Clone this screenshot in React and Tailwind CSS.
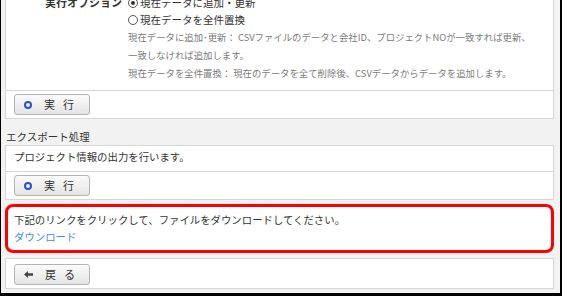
import React from "react";

const font = { fontFamily: '"Noto Sans CJK JP", "Noto Sans", sans-serif' };

const Radio = ({ checked }) => (
  <span className="inline-flex w-[10px] h-[10px] rounded-full border border-[#555] bg-white items-center justify-center mr-[2px] shrink-0">
    {checked && <span className="w-[4px] h-[4px] rounded-full bg-[#333]" />}
  </span>
);

const ActionButton = ({ icon, label }) => (
  <button className="flex items-center w-[76px] h-[21px] rounded-[3px] border border-[#b4b4b4] bg-gradient-to-b from-[#fbfbfb] to-[#e4e4e4] text-[11px] text-[#333] pl-[9px]">
    {icon}
    <span className="ml-[12px] tracking-[8px]">{label}</span>
  </button>
);

const RunIcon = () => (
  <span className="w-[8px] h-[8px] rounded-full border-2 border-[#2a52c9]" />
);

const BackIcon = () => (
  <svg width="9" height="7" viewBox="0 0 9 7">
    <path d="M0 3.5 L4 0 L4 2.3 L9 2.3 L9 4.7 L4 4.7 L4 7 Z" fill="#444" />
  </svg>
);

const App = () => {
  return (
    <div
      className="w-[562px] h-[296px] overflow-hidden bg-[#f2f2f2] border-l border-r-2 border-b-[3px] border-black pl-[4px] pr-[6px] text-[#333]"
      style={font}
    >
      {/* Import options panel */}
      <div className="-mt-[10px] bg-white border border-[#d6d6d6]">
        <div className="flex pt-[3px] pb-[8px]">
          <div className="w-[122px] text-right pr-[6px] text-[11px] leading-[17px] font-bold text-[#333]">
            実行オプション
          </div>
          <div className="flex-1">
            <div className="flex items-center text-[10.5px] leading-[17px]">
              <Radio checked />
              現在データに追加・更新
            </div>
            <div className="flex items-center text-[10.5px] leading-[17px]">
              <Radio />
              現在データを全件置換
            </div>
            <div className="text-[9.4px] leading-[18px] text-[#7a7a7a]">
              <p>現在データに追加･更新： CSVファイルのデータと会社ID、プロジェクトNOが一致すれば更新、</p>
              <p>一致しなければ追加します。</p>
              <p>現在データを全件置換： 現在のデータを全て削除後、CSVデータからデータを追加します。</p>
            </div>
          </div>
        </div>
        <div className="border-t border-[#d6d6d6] pt-[3px] pb-[3px] pl-[8px]">
          <ActionButton icon={<RunIcon />} label="実行" />
        </div>
      </div>

      {/* Export */}
      <div className="pt-[10px] pl-[1px] text-[10.5px] leading-[16px]">エクスポート処理</div>
      <div className="bg-white border border-[#d6d6d6]">
        <div className="pt-[4px] pb-[7px] pl-[8px] text-[10.4px] leading-[14px]">
          プロジェクト情報の出力を行います。
        </div>
        <div className="border-t border-[#d6d6d6] pt-[3px] pb-[3px] pl-[8px]">
          <ActionButton icon={<RunIcon />} label="実行" />
        </div>
      </div>

      {/* Download notice */}
      <div className="mt-[4px] bg-white border-[3px] border-[#ff0000] rounded-[8px] pt-[4px] pb-[5px] pl-[6px] text-[10.4px] leading-[17px]">
        <p>下記のリンクをクリックして、ファイルをダウンロードしてください。</p>
        <a className="text-[#3d8fe0]">ダウンロード</a>
      </div>

      {/* Back */}
      <div className="mt-[5px] bg-white border border-[#d6d6d6] pt-[5px] pb-[3px] pl-[8px]">
        <ActionButton icon={<BackIcon />} label="戻る" />
      </div>
    </div>
  );
};

export default App;
